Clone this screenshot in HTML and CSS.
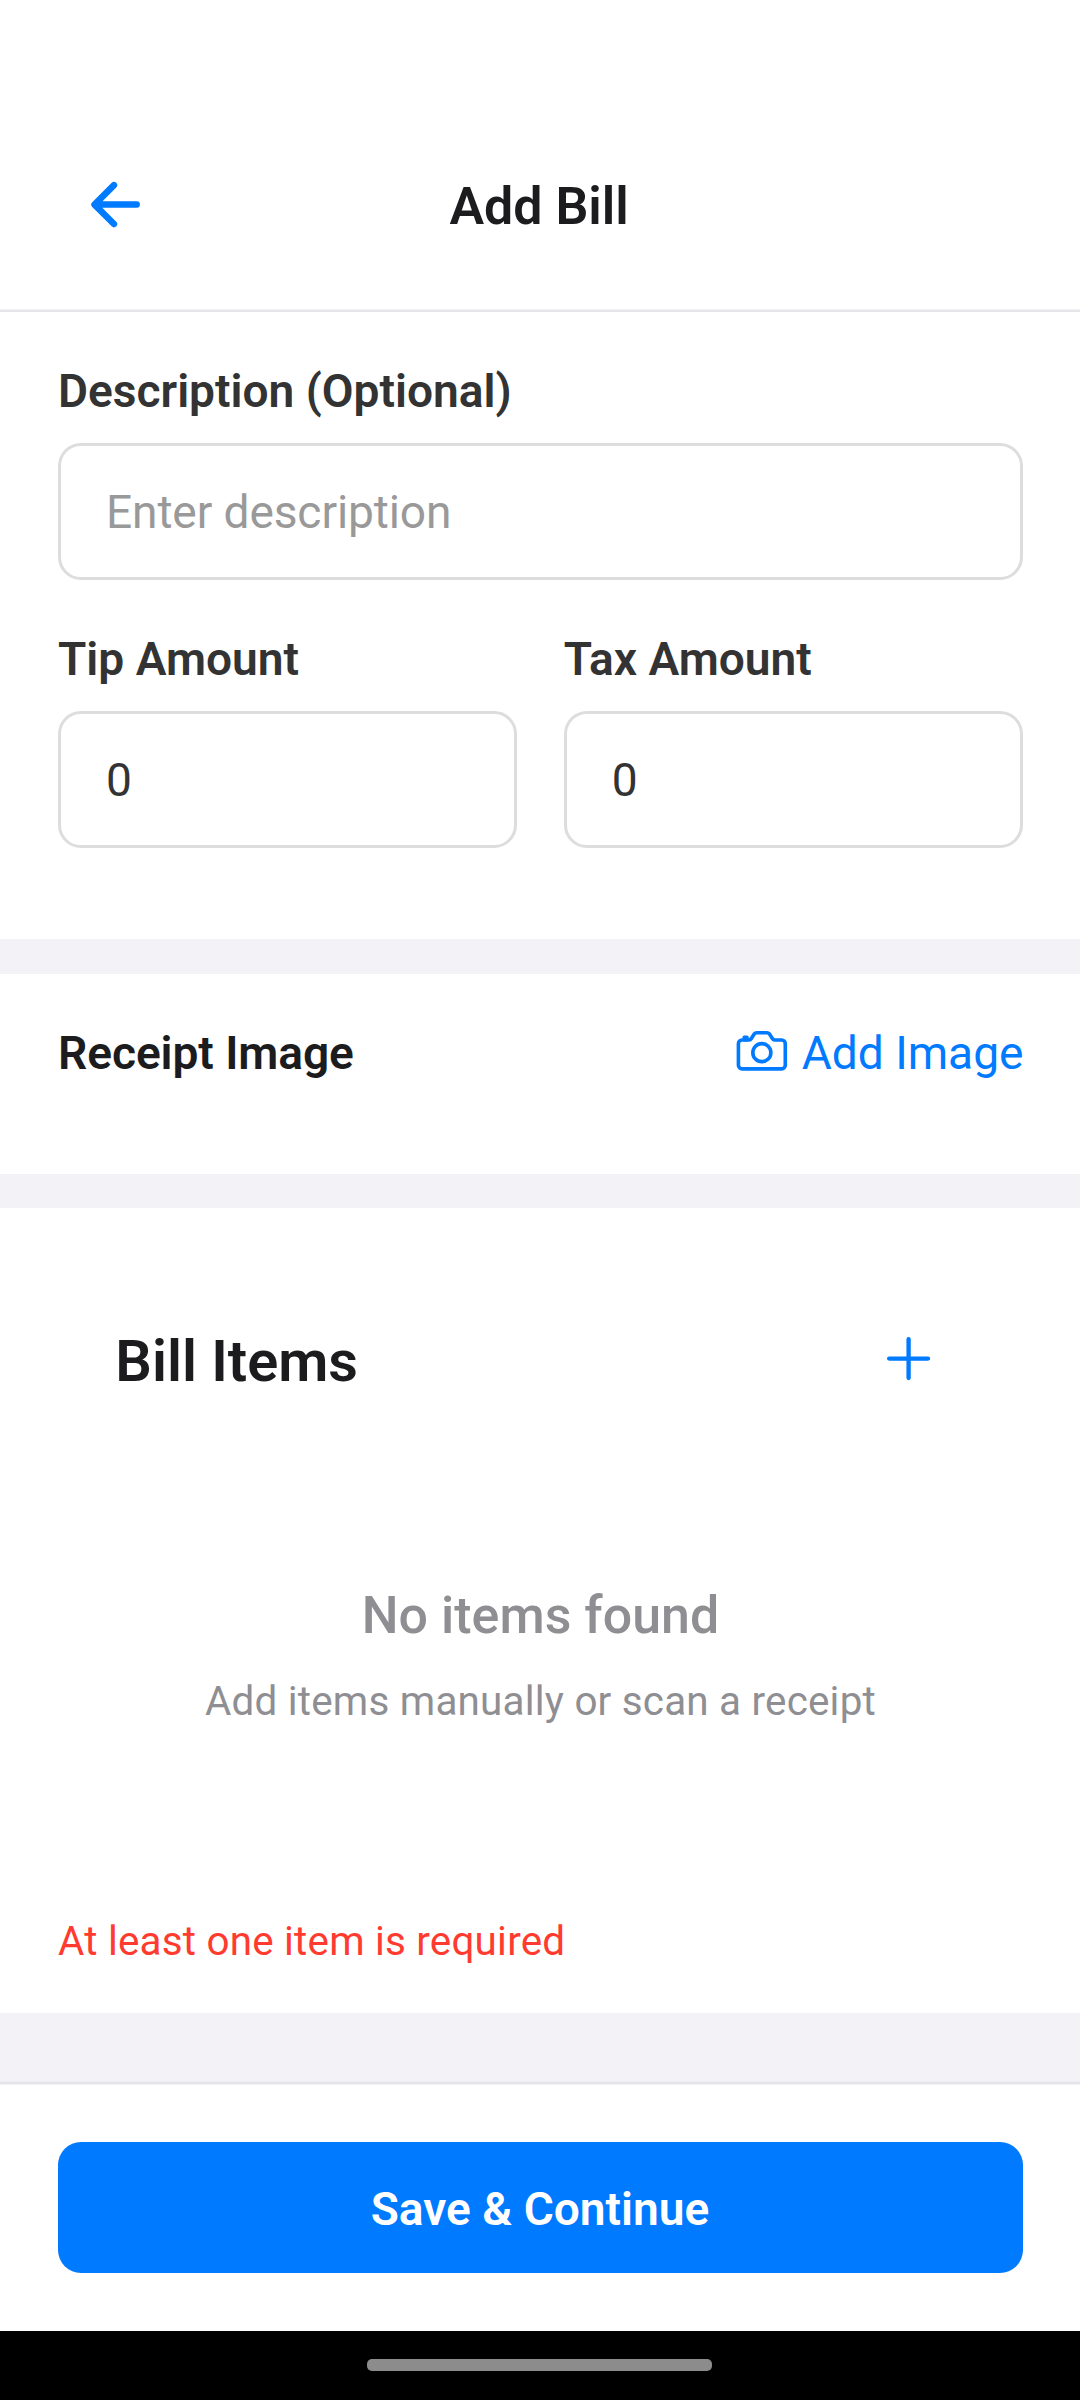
FILE: index.html
```html
<!DOCTYPE html>
<html lang="en">
<head>
<meta charset="utf-8">
<title>Add Bill</title>
<link rel="stylesheet" href="styles.css">
</head>
<body>
<div class="screen">
  <header class="header">
    <button class="icon-button" type="button" aria-label="Back">
      <svg class="icon-lg" viewBox="0 0 512 512" fill="none" stroke="currentColor" stroke-width="48" stroke-linecap="round" stroke-linejoin="round"><path d="M244 400L100 256l144-144M120 256h292"/></svg>
    </button>
    <h1 class="header-title">Add Bill</h1>
  </header>

  <main class="content">
    <section class="section details">
      <div class="field">
        <label class="label" for="description">Description (Optional)</label>
        <input class="input" id="description" type="text" placeholder="Enter description">
      </div>
      <div class="field-row">
        <div class="field">
          <label class="label" for="tip">Tip Amount</label>
          <input class="input" id="tip" type="text" value="0">
        </div>
        <div class="field">
          <label class="label" for="tax">Tax Amount</label>
          <input class="input" id="tax" type="text" value="0">
        </div>
      </div>
    </section>

    <section class="section receipt">
      <h2 class="receipt-title">Receipt Image</h2>
      <button class="add-image" type="button">
        <svg class="icon-md" viewBox="0 0 512 512" fill="none" stroke="currentColor" stroke-width="32" stroke-linecap="round" stroke-linejoin="round"><path d="M350.54 148.68l-26.62-42.06C318.31 100.08 310.62 96 302 96h-92c-8.62 0-16.31 4.08-21.92 10.62l-26.62 42.06C155.85 155.23 148.62 160 140 160H80a32 32 0 00-32 32v192a32 32 0 0032 32h352a32 32 0 0032-32V192a32 32 0 00-32-32h-59c-8.65 0-16.85-4.77-22.46-11.32z"/><circle cx="256" cy="272" r="80"/><path d="M124 158v-22h-24v22"/></svg>
        <span class="add-image-text">Add Image</span>
      </button>
    </section>

    <section class="section items">
      <div class="items-header">
        <h2 class="items-title">Bill Items</h2>
        <button class="icon-button add-item" type="button" aria-label="Add item">
          <svg class="icon-lg" viewBox="0 0 512 512" fill="none" stroke="currentColor" stroke-width="32" stroke-linecap="round" stroke-linejoin="round"><path d="M256 112v288M400 256H112"/></svg>
        </button>
      </div>
      <div class="empty">
        <p class="empty-title">No items found</p>
        <p class="empty-text">Add items manually or scan a receipt</p>
      </div>
      <p class="error">At least one item is required</p>
    </section>
  </main>

  <footer class="footer">
    <button class="save" type="button">Save &amp; Continue</button>
  </footer>
  <div class="nav-bar"><div class="nav-handle"></div></div>
</div>
</body>
</html>
```
FILE: styles.css
```css
* {
  box-sizing: border-box;
}

body {
  margin: 0;
  background: #f2f2f7;
  font-family: Roboto, sans-serif;
  color: #1c1c1e;
}

h1, h2, p {
  margin: 0;
}

button {
  padding: 0;
  border: 0;
  background: none;
  font: inherit;
  color: #007aff;
}

svg {
  display: block;
}

.screen {
  display: flex;
  flex-direction: column;
  width: 1080px;
  height: 2400px;
}

.icon-lg {
  width: 69.2px;
  height: 69.2px;
}

.icon-md {
  width: 57.7px;
  height: 57.7px;
}

.header {
  display: grid;
  grid-template-columns: 70px 1fr 70px;
  align-items: start;
  height: 312px;
  padding: 170px 83px 0 81.2px;
  background: #fff;
  border-bottom: 2px solid #e5e5ea;
  box-shadow: inset 0 -1px #f2f2f5;
}

.header-title {
  padding-top: 7px;
  font-size: 51.9px;
  font-weight: 600;
  line-height: 60px;
  text-align: center;
}

.content {
  display: flex;
  flex-direction: column;
  flex: 1;
}

.section {
  padding: 0 57px 0 58px;
  background: #fff;
}

.details {
  display: flex;
  flex-direction: column;
  gap: 49px;
  height: 627px;
  padding-top: 49px;
  margin-bottom: 35px;
}

.field {
  display: flex;
  flex-direction: column;
  flex: 1 1 0;
  gap: 22px;
  min-width: 0;
}

.details > .field {
  flex: none;
}

.field-row {
  display: flex;
  gap: 46.5px;
}

.label {
  font-size: 46.1px;
  font-weight: 600;
  line-height: 60px;
  color: #333;
}

.input {
  width: 100%;
  height: 137px;
  padding: 1px 45px 0;
  border: 3px solid #ddd;
  border-radius: 23px;
  outline: none;
  background: #fff;
  font: 400 46.1px Roboto, sans-serif;
  color: #333;
}

.input::placeholder {
  color: #999;
  letter-spacing: -0.12px;
}

.receipt {
  display: flex;
  justify-content: space-between;
  align-items: flex-start;
  height: 200px;
  padding-top: 48px;
  margin-bottom: 34px;
}

.receipt-title {
  padding-top: 1px;
  font-size: 46.1px;
  font-weight: 600;
  line-height: 60px;
  letter-spacing: -0.08px;
}

.add-image {
  display: flex;
  gap: 11px;
  margin-right: -0.5px;
}

.add-image-text {
  padding-top: 1px;
  font-size: 46.1px;
  line-height: 60px;
}

.items {
  height: 805px;
  padding-top: 115px;
}

.items-header {
  display: flex;
  justify-content: space-between;
  align-items: flex-start;
  padding: 0 79.8px 0 57.3px;
}

.items-title {
  font-size: 57.7px;
  font-weight: 600;
  line-height: 76px;
}

.add-item {
  padding-top: 0.8px;
}

.empty {
  padding-top: 187px;
  text-align: center;
  color: #8e8e93;
}

.empty-title {
  font-size: 51.9px;
  font-weight: 500;
  line-height: 60px;
  letter-spacing: 0.05px;
}

.empty-text {
  padding-top: 29px;
  font-size: 40.4px;
  line-height: 54px;
  letter-spacing: 0.21px;
}

.error {
  padding-top: 186px;
  font-size: 40.4px;
  line-height: 54px;
  letter-spacing: 0.21px;
  color: #ff3b30;
}

.footer {
  height: 249px;
  padding: 58px 57px 0 58px;
  border-top: 2px solid #e5e5ea;
  background: #fff;
  box-shadow: 0 -1px #ececf1, inset 0 1px #f2f2f5;
}

.save {
  display: block;
  width: 100%;
  height: 131px;
  padding: 3px 1px 0 0;
  border-radius: 23px;
  background: #007aff;
  font-size: 46.1px;
  font-weight: 600;
  line-height: 128px;
  color: #fff;
}

.nav-bar {
  display: flex;
  justify-content: center;
  height: 69px;
  padding: 28px 1px 0 0;
  background: #000;
}

.nav-handle {
  width: 345px;
  height: 12px;
  border-radius: 5px;
  background: #8c8c8c;
}
```
